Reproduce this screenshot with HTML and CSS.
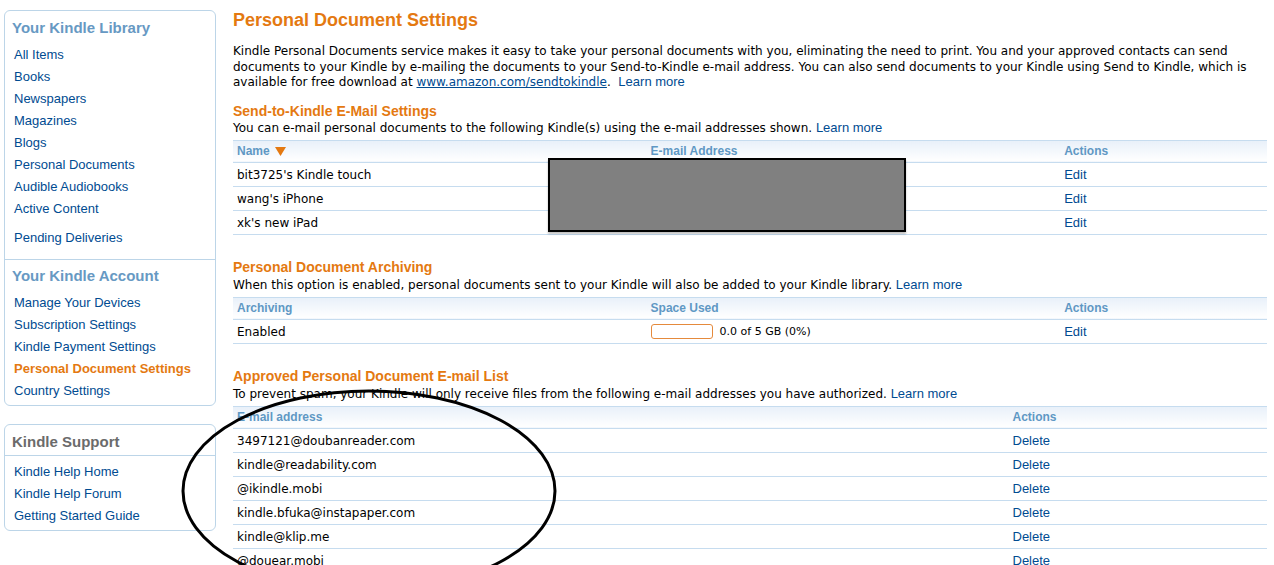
FILE: index.html
```html
<!DOCTYPE html>
<html>
<head>
<meta charset="utf-8">
<title>Personal Document Settings</title>
<link rel="stylesheet" href="styles.css">
</head>
<body>
<div class="page">
  <aside class="sidebar">
    <div class="box">
      <div class="section">
        <h2 class="side-head blue">Your Kindle Library</h2>
        <ul class="side-links">
          <li><a href="#">All Items</a></li>
          <li><a href="#">Books</a></li>
          <li><a href="#">Newspapers</a></li>
          <li><a href="#">Magazines</a></li>
          <li><a href="#">Blogs</a></li>
          <li><a href="#">Personal Documents</a></li>
          <li><a href="#">Audible Audiobooks</a></li>
          <li><a href="#">Active Content</a></li>
          <li class="sep"><a href="#">Pending Deliveries</a></li>
        </ul>
      </div>
      <div class="section divided">
        <h2 class="side-head blue">Your Kindle Account</h2>
        <ul class="side-links">
          <li><a href="#">Manage Your Devices</a></li>
          <li><a href="#">Subscription Settings</a></li>
          <li><a href="#">Kindle Payment Settings</a></li>
          <li><a href="#" class="active">Personal Document Settings</a></li>
          <li><a href="#">Country Settings</a></li>
        </ul>
      </div>
    </div>
    <div class="box support">
      <h2 class="side-head gray">Kindle Support</h2>
      <ul class="side-links">
        <li><a href="#">Kindle Help Home</a></li>
        <li><a href="#">Kindle Help Forum</a></li>
        <li><a href="#">Getting Started Guide</a></li>
      </ul>
    </div>
  </aside>

  <main class="main">
    <h1 class="title">Personal Document Settings</h1>
    <p class="intro">Kindle Personal Documents service makes it easy to take your personal documents with you, eliminating the need to print. You and your approved contacts can send documents to your Kindle by e-mailing the documents to your Send-to-Kindle e-mail address. You can also send documents to your Kindle using Send to Kindle, which is available for free download at <a href="#" class="url">www.amazon.com/sendtokindle</a>.&nbsp; <a href="#" class="more">Learn more</a></p>

    <h3 class="sec-title first">Send-to-Kindle E-Mail Settings</h3>
    <p class="desc">You can e-mail personal documents to the following Kindle(s) using the e-mail addresses shown. <a href="#" class="more">Learn more</a></p>
    <div class="table-wrap">
      <table class="grid">
        <colgroup><col class="c40"><col class="c40"><col class="c20"></colgroup>
        <thead><tr><th>Name <svg class="sort" width="11" height="9" viewBox="0 0 11 9" aria-hidden="true"><path d="M0 0H11L5.5 9Z" fill="#e47911"/></svg></th><th>E-mail Address</th><th>Actions</th></tr></thead>
        <tbody>
          <tr><td>bit3725's Kindle touch</td><td></td><td><a href="#" class="act">Edit</a></td></tr>
          <tr><td>wang's iPhone</td><td></td><td><a href="#" class="act">Edit</a></td></tr>
          <tr><td>xk's new iPad</td><td></td><td><a href="#" class="act">Edit</a></td></tr>
        </tbody>
      </table>
      <div class="redact"></div>
    </div>

    <h3 class="sec-title">Personal Document Archiving</h3>
    <p class="desc spaced">When this option is enabled, personal documents sent to your Kindle will also be added to your Kindle library. <a href="#" class="more">Learn more</a></p>
    <table class="grid">
      <colgroup><col class="c40"><col class="c40"><col class="c20"></colgroup>
      <thead><tr><th>Archiving</th><th>Space Used</th><th>Actions</th></tr></thead>
      <tbody>
        <tr><td>Enabled</td><td><div class="usage"><span class="bar"></span><span class="usage-text">0.0 of 5 GB (0%)</span></div></td><td><a href="#" class="act">Edit</a></td></tr>
      </tbody>
    </table>

    <h3 class="sec-title">Approved Personal Document E-mail List</h3>
    <p class="desc spaced">To prevent spam, your Kindle will only receive files from the following e-mail addresses you have authorized. <a href="#" class="more">Learn more</a></p>
    <table class="grid">
      <colgroup><col class="c75"><col class="c25"></colgroup>
      <thead><tr><th>E-mail address</th><th>Actions</th></tr></thead>
      <tbody>
        <tr><td>3497121@doubanreader.com</td><td><a href="#" class="act">Delete</a></td></tr>
        <tr><td>kindle@readability.com</td><td><a href="#" class="act">Delete</a></td></tr>
        <tr><td>@ikindle.mobi</td><td><a href="#" class="act">Delete</a></td></tr>
        <tr><td>kindle.bfuka@instapaper.com</td><td><a href="#" class="act">Delete</a></td></tr>
        <tr><td>kindle@klip.me</td><td><a href="#" class="act">Delete</a></td></tr>
        <tr><td>@douear.mobi</td><td><a href="#" class="act">Delete</a></td></tr>
      </tbody>
    </table>
  </main>
</div>
<svg class="annotation" width="1274" height="640" viewBox="0 0 1274 640" aria-hidden="true">
  <ellipse cx="369" cy="491" rx="186" ry="100" fill="none" stroke="#000" stroke-width="3"/>
</svg>
</body>
</html>
```

FILE: styles.css
```css
html, body {
  margin: 0;
  padding: 0;
  background: #fff;
}
body {
  font-family: "DejaVu Sans", Verdana, sans-serif;
  font-size: 12px;
  color: #000;
  position: relative;
  overflow: hidden;
  height: 565px;
}
a { text-decoration: none; }

.page {
  display: flex;
  align-items: flex-start;
  padding-top: 10px;
}

/* Sidebar */
.sidebar {
  width: 212px;
  margin-left: 4px;
  flex: none;
  font-family: "Liberation Sans", Arial, sans-serif;
}
.box {
  border: 1px solid #bcd5e8;
  border-radius: 6px;
}
.section {
  padding: 8px 0 10px 0;
}
.section.divided {
  border-top: 1px solid #bcd5e8;
  padding-top: 7px;
  padding-bottom: 3px;
}
.side-head {
  margin: 0 0 0 7px;
  font-size: 15px;
  line-height: 18px;
  font-weight: bold;
}
.side-head.blue { color: #6799c3; }
.side-head.gray { color: #6b6b6b; }
.side-links {
  list-style: none;
  margin: 7px 0 0 0;
  padding: 0 0 0 9px;
}
.side-links li {
  font-size: 13px;
  line-height: 22px;
}
.side-links li.sep { margin-top: 7px; }
.side-links a { color: #004b91; }
.side-links a.active { color: #e47911; font-weight: bold; }

.box.support {
  margin-top: 18px;
}
.box.support .side-head {
  padding: 8px 0 4px 7px;
  margin-left: 0;
  border-bottom: 1px solid #bcd5e8;
}
.box.support .side-links {
  margin-top: 5px;
  padding-bottom: 3px;
}

/* Main */
.main {
  flex: 1;
  margin-left: 17px;
  margin-right: 7px;
}
.title {
  margin: 0;
  font-family: "Liberation Sans", Arial, sans-serif;
  font-size: 18px;
  line-height: 20px;
  font-weight: bold;
  color: #e47911;
}
.intro {
  margin: 14px 0 0 0;
  line-height: 15.5px;
}
.intro a { line-height: 1; }
.url {
  color: #004b91;
  text-decoration: underline;
}
.more {
  font-family: "Liberation Sans", Arial, sans-serif;
  font-size: 13px;
  color: #004b91;
}
.sec-title {
  margin: 24px 0 0 0;
  font-family: "Liberation Sans", Arial, sans-serif;
  font-size: 14px;
  line-height: 17px;
  font-weight: bold;
  color: #e47911;
}
.sec-title.first { margin-top: 12px; }
.desc {
  margin: 0;
  line-height: 16px;
}
.desc.spaced { margin-top: 1px; }

.table-wrap {
  position: relative;
}
.grid {
  width: 100%;
  margin-top: 4px;
  border-collapse: collapse;
  table-layout: fixed;
}
.c40 { width: 40%; }
.c20 { width: 20%; }
.c75 { width: 75%; }
.c25 { width: 25%; }
.grid th {
  height: 21px;
  padding: 0 4px;
  text-align: left;
  font-family: "Liberation Sans", Arial, sans-serif;
  font-size: 12px;
  font-weight: bold;
  color: #5f98c4;
  background: linear-gradient(#e8f0f9, #ffffff);
  border-top: 1px solid #c6dcef;
  border-bottom: 1px solid #c6dcef;
}
.sort {
  vertical-align: -1px;
  margin-left: 2px;
}
.grid td {
  height: 22px;
  padding: 1px 4px 0 4px;
  border-bottom: 1px solid #c6dcef;
  white-space: nowrap;
  overflow: hidden;
}
.act {
  font-family: "Liberation Sans", Arial, sans-serif;
  font-size: 13px;
  color: #004b91;
}
.usage {
  display: flex;
  align-items: center;
}
.bar {
  display: inline-block;
  width: 60px;
  height: 13px;
  border: 1px solid #e58a3c;
  border-radius: 3px;
}
.usage-text {
  margin-left: 7px;
  font-size: 11px;
}

/* overlays */
.redact {
  position: absolute;
  left: 315px;
  top: 18px;
  width: 354px;
  height: 70px;
  background: #808080;
  border: 2px solid #000;
  box-shadow: 0 2px 2px rgba(0,0,0,0.25);
}
.annotation {
  position: absolute;
  left: 0;
  top: 0;
  pointer-events: none;
}
```
